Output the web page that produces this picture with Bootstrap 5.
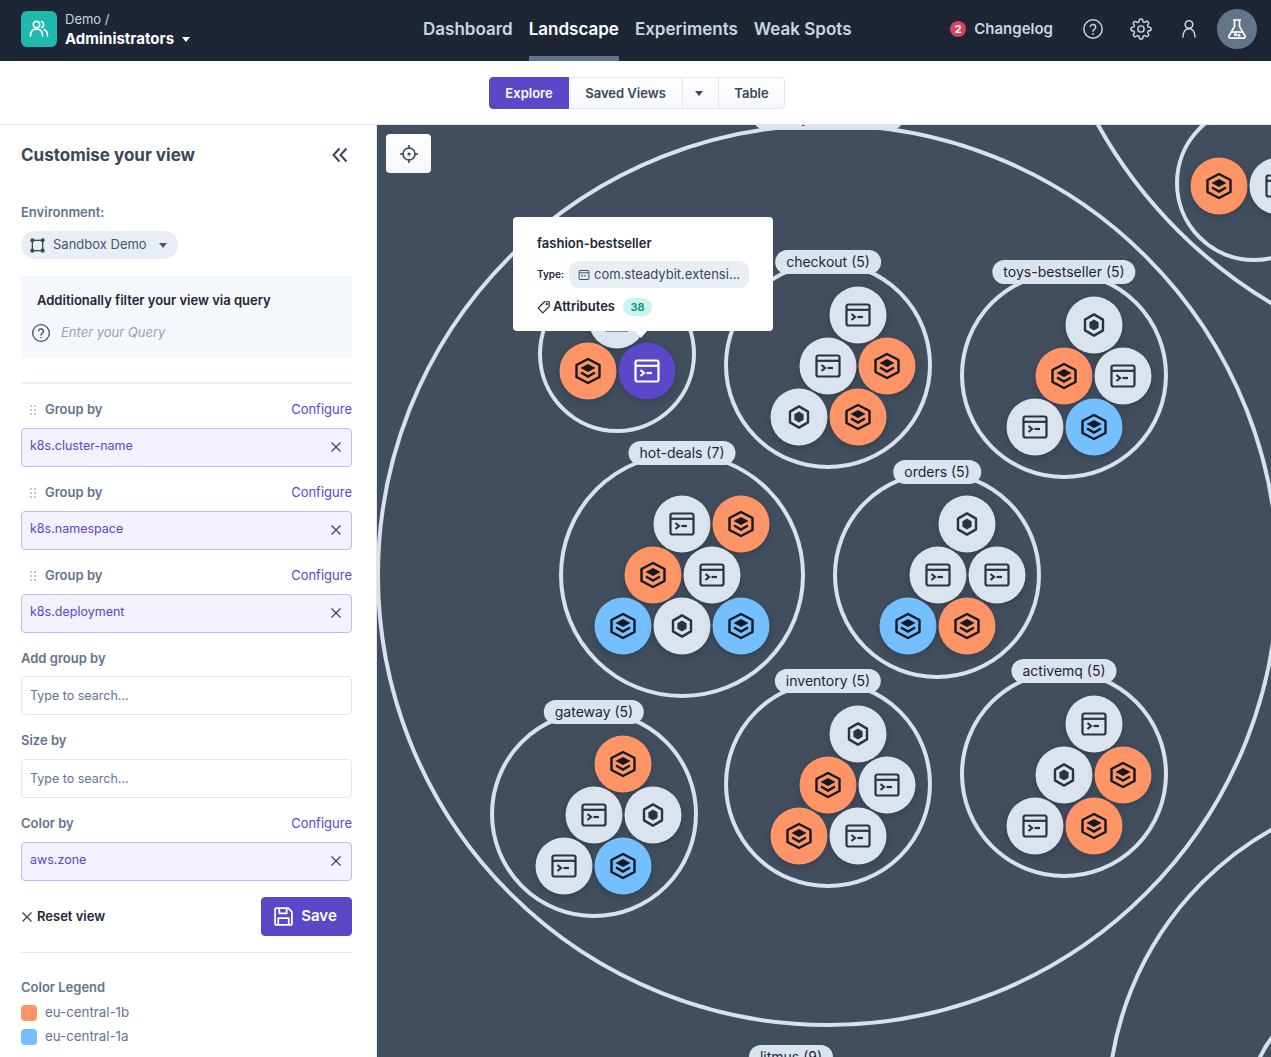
<!DOCTYPE html>
<html>
<head>
<title>Landscape</title>
<meta charset="utf-8">
<meta name="viewport" content="width=device-width, initial-scale=1">
<link href="https://cdn.jsdelivr.net/npm/bootstrap@5.3.3/dist/css/bootstrap.min.css" rel="stylesheet">
<script src="https://cdn.jsdelivr.net/npm/bootstrap@5.3.3/dist/js/bootstrap.bundle.min.js"></script>
<style>
html, body { height: 100%; overflow: hidden; }
body { font-family: Inter, "Liberation Sans", sans-serif; color: #1e2635; background: #fff; }
.topbar { height: 61px; background: #1e2635; padding: 0 14px 3px 21px; }
.brand-box { width: 36px; height: 36px; background: #1fb9ad; border-radius: 6px; }
.brand-name { width: 358px; margin: -1px 0 0 8px; line-height: 20px; }
.brand-top { font-size: 13px; color: #cbd5e1; }
.brand-main { font-size: 15px; font-weight: 700; color: #fff; }
.tiny-caret { display: inline-block; width: 0; height: 0; border-left: 4.5px solid transparent; border-right: 4.5px solid transparent; border-top: 5px solid currentColor; vertical-align: 2px; }
.main-tabs { gap: 16px; height: 61px; align-self: flex-start; }
.main-tab { font-size: 17px; font-weight: 600; color: #cbd5e1; line-height: 59px; height: 61px; text-decoration: none; }
.main-tab.on { color: #fff; border-bottom: 5px solid #64748b; }
.count-dot { width: 16px; height: 16px; border-radius: 50%; background: #d8455a; color: #fff; font-size: 11px; font-weight: 700; line-height: 16px; text-align: center; }
.log-link { font-size: 15px; font-weight: 600; color: #cbd5e1; margin-left: 8px; }
.top-icon { color: #cbd5e1; display: block; }
.avatar { width: 40px; height: 40px; border-radius: 50%; background: #64748b; }
.tabbar { height: 64px; border-bottom: 1px solid #e2e8f0; }
.view-tabs .btn { height: 32px; font-size: 13px; font-weight: 600; color: #3b4758; padding: 0; background: linear-gradient(#fff, #f4f7fc); border-color: #e2e8f0; --bs-btn-border-radius: 4px; line-height: 30px; }
.view-tabs .btn.active { background: #5b48c9; border-color: #5b48c9; color: #fff; }
.workarea { height: 932px; }
.sidepanel { width: 377px; flex: none; border-right: 1px solid #e2e8f0; padding: 19px 24px 0 21px; overflow: hidden; }
.panel-title { font-size: 17px; font-weight: 700; color: #3b4758; line-height: 22px; }
.field-label { font-size: 13px; font-weight: 600; color: #64748b; line-height: 19px; }
.env-pill { height: 28px; width: 157px; border-radius: 14px; background: #e9eef5; margin-top: 9px; padding: 0 11px 0 9px; font-size: 13px; color: #475569; }
.query-box { height: 82px; background: #f4f7fc; margin-top: 17px; padding: 15px 16px 0 10px; }
.query-title { font-size: 13px; font-weight: 600; color: #1e2635; line-height: 19px; margin-left: 6px; }
.query-hint { font-size: 13px; font-style: italic; color: #94a3b8; margin-top: 13px; }
.thin-rule { margin: 24px 0 16px; border: 0; border-top: 2px solid #e9eef5; opacity: 1; }
.grip-dots { margin: 0 7px; }
.cfg-link { font-size: 13px; color: #5b48c9; text-decoration: none; }
.chosen { height: 39px; background: #f3f0ff; border: 1px solid #c4b9f3; border-radius: 4px; margin: 9px 0 16px; padding: 0 9px 2px 8px; font-size: 12.5px; color: #5b48c9; }
.sidepanel .form-control { height: 39px; font-size: 12.5px; border-color: #e2e8f0; border-radius: 4px; padding: 0 8px 1px; margin: 8px 0 16px; }
.sidepanel .form-control::placeholder { color: #64748b; }
.reset-link { font-size: 13px; font-weight: 600; color: #1e2635; }
.save-btn { width: 91px; height: 39px; padding: 0 3px 0 0; background: #5b48c9; border-color: #5b48c9; color: #fff; font-size: 15px; font-weight: 600; border-radius: 4px; }
.legend-rule { margin: 16px 0 25px; border: 0; border-top: 1px solid #e2e8f0; opacity: 1; }
.legend-row { height: 16px; margin-bottom: 8px; font-size: 13.3px; color: #64748b; }
.legend-swatch { width: 16px; height: 16px; border-radius: 4px; margin-right: 8px; }
.canvas-area { position: relative; flex: 1; background: #414e5d; overflow: hidden; }
.canvas-area svg.diagram { position: absolute; left: 0; top: 0; }
.ring-label { position: absolute; transform: translate(-50%, -50%); height: 24px; line-height: 24px; padding: 0 11px; border-radius: 12px; background: #dbe3ee; color: #1e2635; font-size: 14px; white-space: nowrap; }
.center-btn { position: absolute; left: 9px; top: 9px; width: 45px; height: 39px; background: linear-gradient(#fff, #f4f7fc); border-radius: 4px; }
.node-tip { position: absolute; left: 136px; top: 92px; width: 260px; height: 114px; background: #fff; border-radius: 4px; padding: 17px 24px; }
.node-tip::after { content: ""; position: absolute; left: 122px; bottom: -7px; border-left: 6px solid transparent; border-right: 6px solid transparent; border-top: 7px solid #fff; }
.tip-title { font-size: 13px; font-weight: 600; line-height: 19px; }
.tip-type { font-size: 10px; font-weight: 600; margin-right: 5px; width: 27px; }
.tip-pill { width: 180px; height: 27px; border-radius: 9px; background: #e9eef5; font-size: 13px; color: #3b4758; padding-left: 9px; }
.tip-attr { font-size: 13px; font-weight: 600; }
.tip-count { width: 29px; height: 18px; line-height: 18px; border-radius: 9px; background: #c9f5ef; color: #0f8b7c; font-size: 11px; font-weight: 600; text-align: center; margin-left: 8px; }
</style>
</head>
<body>

<svg width="0" height="0" class="position-absolute">
  <symbol id="i-layers" viewBox="0 0 28 28">
    <path d="M14 2 25.5 8V20L14 26 2.5 20V8Z" fill="none" stroke="currentColor" stroke-width="2.4" stroke-linejoin="round"/>
    <path d="M14 7 21.5 11 14 15 6.5 11Z" fill="currentColor"/>
    <path d="M7 15.5 14 19.5 21 15.5" fill="none" stroke="currentColor" stroke-width="2.4"/>
  </symbol>
  <symbol id="i-hex" viewBox="0 0 28 28">
    <path d="M14 3.4 23 8.6V19.4L14 24.6 5 19.4V8.6Z" fill="none" stroke="currentColor" stroke-width="2.4" stroke-linejoin="round"/>
    <path d="M14 8.6 18.6 11.3V16.7L14 19.4 9.4 16.7V11.3Z" fill="currentColor"/>
  </symbol>
  <symbol id="i-term" viewBox="0 0 28 28">
    <rect x="2.5" y="3.5" width="23" height="21" rx="2" fill="none" stroke="currentColor" stroke-width="2.2"/>
    <path d="M2.5 8.8H25.5" stroke="currentColor" stroke-width="2.2"/>
    <path d="M7.5 13 11 16 7.5 19" fill="none" stroke="currentColor" stroke-width="2.2"/>
    <path d="M13.5 16H19" stroke="currentColor" stroke-width="2.2"/>
  </symbol>
  <symbol id="i-help" viewBox="0 0 24 24">
    <circle cx="12" cy="12" r="10" fill="none" stroke="currentColor" stroke-width="1.6"/>
    <path d="M9 9.4a3 3 0 0 1 5.9.8c0 2-2.9 2.4-2.9 4.2" fill="none" stroke="currentColor" stroke-width="1.6" stroke-linecap="round"/>
    <circle cx="12" cy="17.4" r="1" fill="currentColor"/>
  </symbol>
  <symbol id="i-close" viewBox="0 0 12 12">
    <path d="M1.5 1.5 10.5 10.5M10.5 1.5 1.5 10.5" stroke="currentColor" stroke-width="1.3" fill="none"/>
  </symbol>
  <symbol id="i-grip" viewBox="0 0 10 12">
    <g fill="#aab5c4"><circle cx="3" cy="2" r="1"/><circle cx="7" cy="2" r="1"/><circle cx="3" cy="6" r="1"/><circle cx="7" cy="6" r="1"/><circle cx="3" cy="10" r="1"/><circle cx="7" cy="10" r="1"/></g>
  </symbol>
</svg>

<div class="topbar d-flex align-items-center">
  <div class="brand-box d-flex align-items-center justify-content-center flex-shrink-0">
    <svg width="20" height="20" viewBox="0 0 20 20" fill="none" stroke="#fff" stroke-width="1.6" stroke-linecap="round"><circle cx="7.5" cy="5.6" r="3.2"/><path d="M1.5 17c0-4.4 2.4-7 6-7s6 2.6 6 7"/><path d="M12.6 2.6a3.2 3.2 0 0 1 0 6"/><path d="M15 10.6c2.2.8 3.5 3.2 3.5 6.4"/></svg>
  </div>
  <div class="brand-name flex-shrink-0">
    <div class="brand-top">Demo /</div>
    <div class="brand-main">Administrators <span class="tiny-caret ms-1"></span></div>
  </div>
  <nav class="main-tabs d-flex">
    <a class="main-tab" href="#">Dashboard</a>
    <a class="main-tab on" href="#">Landscape</a>
    <a class="main-tab" href="#">Experiments</a>
    <a class="main-tab" href="#">Weak Spots</a>
  </nav>
  <div class="ms-auto d-flex align-items-center">
    <span class="count-dot">2</span>
    <span class="log-link">Changelog</span>
    <svg class="top-icon" style="margin-left:29px" width="22" height="22"><use href="#i-help"/></svg>
    <svg class="top-icon" style="margin-left:26px" width="22" height="22" viewBox="0 0 24 24" fill="none" stroke="currentColor" stroke-width="1.6"><circle cx="12" cy="12" r="3.4"/><path d="M19.4 15a1.65 1.65 0 0 0 .33 1.82l.06.06a2 2 0 0 1 0 2.83 2 2 0 0 1-2.83 0l-.06-.06a1.65 1.65 0 0 0-1.82-.33 1.65 1.65 0 0 0-1 1.51V21a2 2 0 0 1-2 2 2 2 0 0 1-2-2v-.09A1.65 1.65 0 0 0 9 19.4a1.65 1.65 0 0 0-1.82.33l-.06.06a2 2 0 0 1-2.83 0 2 2 0 0 1 0-2.83l.06-.06a1.65 1.65 0 0 0 .33-1.82 1.65 1.65 0 0 0-1.51-1H3a2 2 0 0 1-2-2 2 2 0 0 1 2-2h.09A1.65 1.65 0 0 0 4.6 9a1.65 1.65 0 0 0-.33-1.82l-.06-.06a2 2 0 0 1 0-2.83 2 2 0 0 1 2.83 0l.06.06a1.65 1.65 0 0 0 1.82.33H9a1.65 1.65 0 0 0 1-1.51V3a2 2 0 0 1 2-2 2 2 0 0 1 2 2v.09a1.65 1.65 0 0 0 1 1.51 1.65 1.65 0 0 0 1.82-.33l.06-.06a2 2 0 0 1 2.83 0 2 2 0 0 1 0 2.83l-.06.06a1.65 1.65 0 0 0-.33 1.82V9a1.65 1.65 0 0 0 1.51 1H21a2 2 0 0 1 2 2 2 2 0 0 1-2 2h-.09a1.65 1.65 0 0 0-1.51 1z"/></svg>
    <svg class="top-icon" style="margin-left:26px" width="22" height="22" viewBox="0 0 22 22" fill="none" stroke="currentColor" stroke-width="1.6" stroke-linecap="round"><circle cx="11" cy="6.5" r="3.8"/><path d="M5 19c0-5 2.4-8.4 6-8.4s6 3.4 6 8.4"/></svg>
    <div class="avatar d-flex align-items-center justify-content-center" style="margin-left:17px">
      <svg width="22" height="22" viewBox="0 0 22 22" fill="none" stroke="#fff" stroke-width="1.7" stroke-linejoin="round"><path d="M7 2H15M8.5 2V8.4L3 18a1.4 1.4 0 0 0 1.2 2.1H17.8A1.4 1.4 0 0 0 19 18L13.5 8.4V2"/><path d="M5.6 14H16.4" /><circle cx="9.5" cy="16.6" r=".7" fill="#fff"/><circle cx="13" cy="17.2" r=".7" fill="#fff"/></svg>
    </div>
  </div>
</div>

<div class="tabbar d-flex align-items-center justify-content-center">
  <div class="btn-group view-tabs" style="margin-left:3px">
    <button class="btn active" style="width:80px">Explore</button>
    <button class="btn" style="width:115px">Saved Views</button>
    <button class="btn" style="width:37px"><span class="tiny-caret me-1"></span></button>
    <button class="btn" style="width:67px">Table</button>
  </div>
</div>

<div class="workarea d-flex">
  <aside class="sidepanel">
    <div class="d-flex align-items-center justify-content-between">
      <div class="panel-title">Customise your view</div>
      <svg class="me-1" width="16" height="16" viewBox="0 0 16 16" fill="none" stroke="#3b4758" stroke-width="2"><path d="M7.5 1.5 1.5 8l6 6.5M14.5 1.5 8.5 8l6 6.5"/></svg>
    </div>
    <div class="field-label" style="margin-top:37px">Environment:</div>
    <div class="env-pill d-flex align-items-center">
      <svg width="15" height="15" viewBox="0 0 16 16" fill="none" stroke="#3b4758" stroke-width="1.4"><rect x="2.5" y="2.5" width="11" height="11"/><g fill="#3b4758"><circle cx="2.5" cy="2.5" r="1.5"/><circle cx="13.5" cy="2.5" r="1.5"/><circle cx="2.5" cy="13.5" r="1.5"/><circle cx="13.5" cy="13.5" r="1.5"/></g></svg>
      <span class="ms-2">Sandbox Demo</span>
      <span class="tiny-caret ms-auto"></span>
    </div>
    <div class="query-box">
      <div class="query-title">Additionally filter your view via query</div>
      <div class="query-hint d-flex align-items-center">
        <svg style="color:#475569;margin-right:10px" width="20" height="20"><use href="#i-help"/></svg>
        Enter your Query
      </div>
    </div>
    <hr class="thin-rule">

    <div class="d-flex justify-content-between align-items-center field-label">
      <span><svg class="grip-dots" width="10" height="12"><use href="#i-grip"/></svg>Group by</span>
      <a class="cfg-link fw-normal" href="#">Configure</a>
    </div>
    <div class="chosen d-flex align-items-center justify-content-between">k8s.cluster-name <svg width="12" height="12" style="color:#3b4758"><use href="#i-close"/></svg></div>

    <div class="d-flex justify-content-between align-items-center field-label">
      <span><svg class="grip-dots" width="10" height="12"><use href="#i-grip"/></svg>Group by</span>
      <a class="cfg-link fw-normal" href="#">Configure</a>
    </div>
    <div class="chosen d-flex align-items-center justify-content-between">k8s.namespace <svg width="12" height="12" style="color:#3b4758"><use href="#i-close"/></svg></div>

    <div class="d-flex justify-content-between align-items-center field-label">
      <span><svg class="grip-dots" width="10" height="12"><use href="#i-grip"/></svg>Group by</span>
      <a class="cfg-link fw-normal" href="#">Configure</a>
    </div>
    <div class="chosen d-flex align-items-center justify-content-between">k8s.deployment <svg width="12" height="12" style="color:#3b4758"><use href="#i-close"/></svg></div>

    <div class="field-label">Add group by</div>
    <input class="form-control" placeholder="Type to search...">
    <div class="field-label">Size by</div>
    <input class="form-control" placeholder="Type to search..." style="margin-top:9px">
    <div class="d-flex justify-content-between align-items-center field-label">
      <span>Color by</span>
      <a class="cfg-link fw-normal" href="#">Configure</a>
    </div>
    <div class="chosen d-flex align-items-center justify-content-between">aws.zone <svg width="12" height="12" style="color:#3b4758"><use href="#i-close"/></svg></div>

    <div class="d-flex justify-content-between align-items-center">
      <span class="reset-link d-flex align-items-center"><svg class="me-1" width="12" height="12" style="color:#3b4758"><use href="#i-close"/></svg>Reset view</span>
      <button class="btn save-btn d-flex align-items-center justify-content-center">
        <svg style="margin-right:7px" width="21" height="21" viewBox="0 0 20 20" fill="none" stroke="#fff" stroke-width="1.7" stroke-linejoin="round"><path d="M2 3.2A1.2 1.2 0 0 1 3.2 2H14.5L18 5.5V16.8A1.2 1.2 0 0 1 16.8 18H3.2A1.2 1.2 0 0 1 2 16.8Z"/><path d="M6 2V7H13V2M5 18V11.5H15V18"/></svg>Save
      </button>
    </div>
    <hr class="legend-rule">
    <div class="field-label" style="margin-bottom:8px">Color Legend</div>
    <div class="legend-row d-flex align-items-center"><span class="legend-swatch" style="background:#ff9566"></span>eu-central-1b</div>
    <div class="legend-row d-flex align-items-center"><span class="legend-swatch" style="background:#74bfff"></span>eu-central-1a</div>
  </aside>

  <main class="canvas-area" id="canvas">
    <svg class="diagram" id="diagram" width="894" height="932" viewBox="377 125 894 932"></svg>

    <div class="center-btn d-flex align-items-center justify-content-center">
      <svg width="20" height="20" viewBox="0 0 20 20" fill="none" stroke="#3b4758" stroke-width="1.6"><circle cx="10" cy="10" r="6"/><circle cx="10" cy="10" r="1.6" fill="#3b4758" stroke="none"/><path d="M10 1V5M10 15V19M1 10H5M15 10H19"/></svg>
    </div>

    <div class="node-tip">
      <div class="tip-title">fashion-bestseller</div>
      <div class="d-flex align-items-center" style="margin-top:8px">
        <span class="tip-type">Type:</span>
        <span class="tip-pill d-flex align-items-center">
          <svg class="me-1" style="color:#3b4758" width="12" height="12"><use href="#i-term"/></svg>
          com.steadybit.extensi...
        </span>
      </div>
      <div class="d-flex align-items-center" style="margin-top:9px">
        <svg style="margin-right:2px" width="14" height="14" viewBox="0 0 12 12" fill="none" stroke="#1e2635" stroke-width="1"><path d="M1 7 6.5 1.5 10.5 1.5 10.5 5.5 5 11Z" stroke-linejoin="round"/><circle cx="8.4" cy="3.6" r=".5"/></svg>
        <span class="tip-attr">Attributes</span>
        <span class="tip-count">38</span>
      </div>
    </div>
  </main>
</div>

<script>
var colors = { O: "#ff9566", B: "#74bfff", T: "#dbe3ee", H: "#dbe3ee", P: "#5b48c9" };
var icons = { O: "i-layers", B: "i-layers", T: "i-term", H: "i-hex", P: "i-term" };

// rings: label, centre, radius, label position, nodes [x, y, kind]
var rings = [
  { t: "steadybit-demo (9)", x: 828, y: 575, r: 450, lx: 828, ly: 118, n: [] },
  { t: "", x: 1515, y: -107, r: 477, n: [] },
  { t: "", x: 1254, y: 183, r: 77, n: [[1219,186,"O"],[1278,186,"T"]] },
  { t: "", x: 1430, y: 1110, r: 322, n: [] },
  { t: "", x: 1370, y: 1110, r: 122, n: [] },
  { t: "litmus (9)", lx: 791, ly: 1057, n: [] },
  { t: "", x: 617, y: 354, r: 77, n: [[617,320,"T"],[588,371,"O"],[647,371,"P"]] },
  { t: "checkout (5)", x: 828, y: 365, r: 102, lx: 828, ly: 262, n: [[858,315,"T"],[828,366,"T"],[887,366,"O"],[799,417,"H"],[858,417,"O"]] },
  { t: "toys-bestseller (5)", x: 1064, y: 375, r: 102, lx: 1064, ly: 272, n: [[1094,325,"H"],[1064,376,"O"],[1123,376,"T"],[1035,427,"T"],[1094,427,"B"]] },
  { t: "hot-deals (7)", x: 682, y: 575, r: 121, lx: 682, ly: 453, n: [[682,524,"T"],[741,524,"O"],[653,575,"O"],[712,575,"T"],[623,626,"B"],[682,626,"H"],[741,626,"B"]] },
  { t: "orders (5)", x: 937, y: 575, r: 102, lx: 937, ly: 472, n: [[967,524,"H"],[938,575,"T"],[997,575,"T"],[908,626,"B"],[967,626,"O"]] },
  { t: "gateway (5)", x: 594, y: 814, r: 102, lx: 594, ly: 712, n: [[623,764,"O"],[594,815,"T"],[653,815,"H"],[564,866,"T"],[623,866,"B"]] },
  { t: "inventory (5)", x: 828, y: 784, r: 102, lx: 828, ly: 681, n: [[858,734,"H"],[828,785,"O"],[887,785,"T"],[799,836,"O"],[858,836,"T"]] },
  { t: "activemq (5)", x: 1064, y: 774, r: 102, lx: 1064, ly: 671, n: [[1094,724,"T"],[1064,775,"H"],[1123,775,"O"],[1035,826,"T"],[1094,826,"O"]] }
];

var svg = "";
var canvas = document.getElementById("canvas");
rings.forEach(function (g) {
  if (g.r) svg += '<circle cx="' + g.x + '" cy="' + g.y + '" r="' + g.r + '" fill="none" stroke="#d8e1ec" stroke-width="4"/>';
  g.n.forEach(function (p) {
    var dark = p[2] == "P" ? "#fff" : (p[2] == "O" || p[2] == "B" ? "#14181f" : "#2a3341");
    svg += '<circle cx="' + p[0] + '" cy="' + p[1] + '" r="28.5" fill="' + colors[p[2]] + '" style="filter:drop-shadow(0 2px 3px rgba(20,28,40,.3))"/>';
    svg += '<use href="#' + icons[p[2]] + '" x="' + (p[0] - 14) + '" y="' + (p[1] - 14) + '" width="28" height="28" style="color:' + dark + '"/>';
  });
});
document.getElementById("diagram").innerHTML = svg;

rings.forEach(function (g) {
  if (!g.t) return;
  var s = document.createElement("span");
  s.className = "ring-label";
  s.textContent = g.t;
  s.style.left = (g.lx - 377) + "px";
  s.style.top = (g.ly - 125) + "px";
  canvas.insertBefore(s, canvas.querySelector(".center-btn"));
});
</script>
</body>
</html>
